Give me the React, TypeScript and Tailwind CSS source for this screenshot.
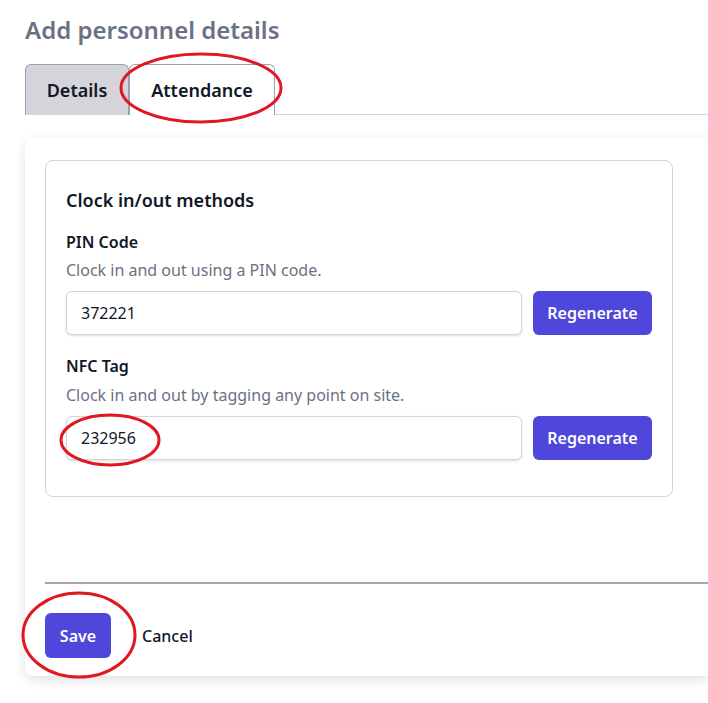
import { useState } from "react";

function CodeRow({ value, onRegenerate }: { value: string; onRegenerate: () => void }) {
  return (
    <div className="flex gap-[11px]">
      <input
        readOnly
        value={value}
        className="h-[44px] flex-1 rounded-md border border-gray-300 bg-white px-[14px] text-[16px] text-gray-900 shadow-sm outline-none"
      />
      <button
        onClick={onRegenerate}
        className="h-[44px] w-[119px] rounded-md bg-[#4f46dc] text-[16px] font-semibold text-white"
      >
        Regenerate
      </button>
    </div>
  );
}

export default function App() {
  const [pin, setPin] = useState("372221");
  const [nfc, setNfc] = useState("232956");

  const random = () => String(Math.floor(100000 + Math.random() * 900000));

  return (
    <main
      className="relative min-h-[703px] w-[708px] overflow-hidden bg-white"
      style={{ fontFamily: '"Noto Sans", "Open Sans", sans-serif' }}
    >
      <div className="pl-[25px] pt-[12px]">
        <h1 className="text-[24px] font-semibold leading-[36px] text-gray-500">Add personnel details</h1>

        {/* tabs */}
        <div className="mt-[16px] flex h-[51px] items-stretch">
          <button className="w-[104px] rounded-t-md border border-b-0 border-gray-400 bg-[#d4d4da] text-[18px] font-semibold text-gray-900">
            Details
          </button>
          <button className="w-[146px] rounded-t-md border border-b-0 border-gray-400 bg-white text-[18px] font-semibold text-gray-900">
            Attendance
          </button>
          <div className="flex-1 border-b border-gray-300" />
        </div>

        {/* panel */}
        <div className="mt-[23px] rounded-l-lg bg-white pb-[18px] pl-[20px] shadow-[0_4px_12px_rgba(0,0,0,0.12)]">
          <div className="pr-[35px] pt-[22px]">
            <div className="rounded-lg border border-gray-300 px-[20px] pb-[36px] pt-[26px]">
              <h2 className="text-[18px] font-semibold leading-[26px] text-gray-900">Clock in/out methods</h2>

              <h3 className="mt-[17px] text-[16px] font-semibold leading-[24px] text-gray-900">PIN Code</h3>
              <p className="mt-[4px] text-[16px] leading-[24px] text-gray-500">Clock in and out using a PIN code.</p>
              <div className="mt-[9px]">
                <CodeRow value={pin} onRegenerate={() => setPin(random())} />
              </div>

              <h3 className="mt-[19px] text-[16px] font-semibold leading-[24px] text-gray-900">NFC Tag</h3>
              <p className="mt-[5px] text-[16px] leading-[24px] text-gray-500">
                Clock in and out by tagging any point on site.
              </p>
              <div className="mt-[9px]">
                <CodeRow value={nfc} onRegenerate={() => setNfc(random())} />
              </div>
            </div>
          </div>

          <div className="mt-[85px] border-t-2 border-[#a9a4b4]" />

          <div className="mt-[29px] flex items-center gap-[31px]">
            <button className="h-[45px] w-[66px] rounded-md bg-[#4f46dc] text-[16px] font-semibold text-white">
              Save
            </button>
            <button className="text-[16px] font-medium text-gray-900">Cancel</button>
          </div>
        </div>
      </div>

      {/* hand-drawn highlight rings */}
      <svg className="pointer-events-none absolute left-0 top-0" width="708" height="703">
        <g fill="none" stroke="#e0191f" strokeWidth="3">
          <ellipse cx="201" cy="88" rx="80" ry="34" />
          <ellipse cx="110" cy="440" rx="49" ry="25" />
          <ellipse cx="79" cy="635" rx="56" ry="42" />
        </g>
      </svg>
    </main>
  );
}
